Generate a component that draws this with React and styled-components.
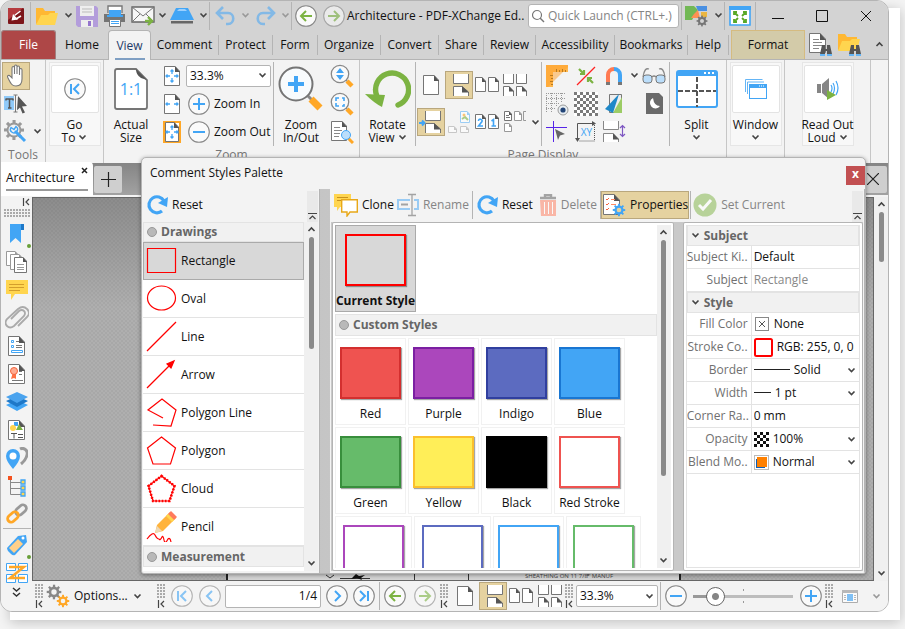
import React, { useState } from 'react';
import styled, { createGlobalStyle, css } from 'styled-components';

const c = {
  chrome: '#d3d3d3',
  ribbon: '#f3f3f3',
  line: '#b4b4b4',
  soft: '#e3e3e3',
  text: '#111',
  muted: '#767676',
  grey: '#757575',
  blue: '#42a5f5',
  green: '#7cb342',
  orange: '#ffa726',
  yellow: '#ffd54f',
  tan: '#e5d2a0',
  tanLine: '#b9a77d',
  red: '#f00',
};

const GlobalStyle = createGlobalStyle`
  * { box-sizing: border-box; }
  body {
    margin: 0;
    font: 12px/16px "Open Sans", "Noto Sans", sans-serif;
    color: ${c.text};
    background: #fff;
    overflow: hidden;
  }
  button, input, select { font: inherit; color: inherit; margin: 0; }
  button { background: none; border: 0; padding: 0; }
  svg { display: block; flex: none; }
`;

/* ---------- shell ---------- */

const Stage = styled.div`
  position: relative;
  min-height: 100vh;
  padding: 0 16px 17px 0;
  background: #f4f4f4;

  &::before {
    content: '';
    position: absolute;
    inset: 8px 5px 9px 10px;
    background: #fff;
    box-shadow: 0 2px 12px rgba(0, 0, 0, 0.22);
  }
`;

const Shell = styled.div`
  position: relative;
  display: flex;
  flex-direction: column;
  height: calc(100vh - 17px);
  border: 1px solid ${c.line};
  border-radius: 12px;
  overflow: hidden;
  background: ${c.ribbon};
`;

const TitleBar = styled.header`
  display: flex;
  align-items: center;
  height: 29px;
  flex: none;
  background: ${c.chrome};
`;

const Tool = styled.button`
  display: flex;
  align-items: center;
  justify-content: center;
  flex: none;
  width: ${p => p.$w || 28}px;
  height: ${p => p.$h || 28}px;
  opacity: ${p => (p.$dim ? 0.6 : 1)};
  ${p => p.$on && css`
    background: ${c.tan};
    border: 1px solid ${c.tanLine};
  `}
`;

const VLine = styled.span`
  flex: none;
  width: 1px;
  height: ${p => p.$h || 28}px;
  margin: 0 ${p => p.$m || 0}px;
  background: ${c.line};
`;

const DocTitle = styled.h1`
  flex: 1;
  margin: 0;
  font-size: 12px;
  font-weight: 400;
  white-space: nowrap;
`;

const Search = styled.label`
  display: flex;
  align-items: center;
  gap: 3px;
  width: 151px;
  height: 24px;
  flex: none;
  padding-left: 2px;
  margin-right: 2px;
  background: #fff;
  border: 1px solid ${c.line};
  border-radius: 3px;

  input {
    flex: 1;
    min-width: 0;
    padding: 0;
    border: 0;
    outline: 0;
    background: none;
  }
  input::placeholder { color: #858585; opacity: 1; }
`;

/* ---------- tabs ---------- */

const Tabs = styled.nav`
  display: flex;
  align-items: stretch;
  height: 30px;
  flex: none;
  background: ${c.chrome};
  border-bottom: 1px solid ${c.line};
`;

const Tab = styled.button`
  display: flex;
  align-items: center;
  justify-content: center;
  width: ${p => p.$w}px;
  flex: none;
  ${p => p.$kind === 'file' && css`
    background: #ae4747;
    color: #fff;
    border-radius: 3px 3px 0 0;
    border: 1px solid #a08080;
    border-bottom: 0;
  `}
  ${p => p.$kind === 'active' && css`
    background: ${c.ribbon};
    color: #1f3b68;
    border: 1px solid ${c.line};
    border-bottom: 0;
    border-radius: 4px 4px 0 0;
    margin-bottom: -1px;
    span {
      width: 30px;
      text-align: center;
      line-height: 24px;
      padding-top: 2px;
      border-bottom: 2px solid #7f9fc3;
    }
  `}
  ${p => p.$kind === 'format' && css`
    background: #d3cba9;
    border: 1px solid #d5bb80;
    border-bottom: 0;
    margin-left: 2px;
  `}
`;

const TabLine = styled(VLine)`
  align-self: center;
  height: 20px;
`;

const Spacer = styled.span`
  flex: 1;
`;

/* ---------- ribbon ---------- */

const Ribbon = styled.section`
  display: flex;
  height: 103px;
  flex: none;
  background: ${c.ribbon};
  overflow: hidden;
`;

const Group = styled.div`
  display: flex;
  flex-direction: column;
  width: ${p => p.$w}px;
  flex: none;
  border-right: 1px solid #c6c6c6;
`;

const GroupBody = styled.div`
  display: flex;
  align-items: center;
  justify-content: ${p => (p.$center ? 'center' : 'flex-start')};
  height: 87px;
  flex: none;
`;

const GroupLabel = styled.div`
  height: 16px;
  line-height: 16px;
  color: ${c.muted};
  text-align: center;
`;

const Stack = styled.div`
  display: grid;
  grid-template-columns: ${p => p.$cols || 'auto'};
  grid-auto-rows: 28px;
  align-items: center;
  justify-items: ${p => p.$items || 'center'};
  width: ${p => p.$w}px;
  flex: none;
`;

const BigButton = styled.button`
  display: flex;
  flex-direction: column;
  align-items: center;
  width: ${p => p.$w || 52}px;
  height: 84px;
  flex: none;
  line-height: 13px;
  white-space: nowrap;
  ${p => p.$card && css`
    border: 1px solid #e6e6e6;
    background: #f8f8f8;
  `}
`;

const BigIcon = styled.span`
  display: flex;
  align-items: center;
  justify-content: center;
  width: 48px;
  height: ${p => (p.$card ? 48 : 55)}px;
  flex: none;
  margin: ${p => (p.$card ? '2px 0 5px' : '0 0 1px')};
  ${p => p.$card && css`
    border: 1px solid ${c.soft};
    border-radius: 2px;
    background: #fff;
  `}
`;

const Caption = styled.span`
  display: flex;
  align-items: center;
  gap: 3px;
  height: 13px;
`;

const TextTool = styled.button`
  display: flex;
  align-items: center;
  gap: ${p => p.$gap || 4}px;
  height: ${p => p.$h || 28}px;
  padding: 0 ${p => p.$pad || 0}px;
  flex: none;
  white-space: nowrap;
  color: ${p => (p.$dim ? '#858585' : 'inherit')};
  svg { opacity: ${p => (p.$dim ? 0.5 : 1)}; }
  ${p => p.$on && css`
    background: ${c.tan};
    border: 1px solid ${c.tanLine};
  `}
`;

const Combo = styled.span`
  display: grid;
  align-items: center;
  width: ${p => p.$w || 85}px;
  height: 22px;
  flex: none;
  background: #fff;
  border: 1px solid ${c.line};
  border-radius: 2px;

  > * { grid-area: 1 / 1; }
  > svg { justify-self: end; margin-right: 3px; pointer-events: none; }
  select {
    appearance: none;
    width: 100%;
    border: 0;
    padding: 0 0 0 3px;
    background: none;
  }
`;

const DisplayGrid = styled.div`
  display: grid;
  grid-template-columns: 29px 28px 28px 28px 12px;
  grid-auto-rows: 28px;
  row-gap: 9px;
  align-items: center;
  justify-items: center;
`;

/* ---------- document area ---------- */

const DocTabs = styled.div`
  display: flex;
  align-items: center;
  height: 34px;
  flex: none;
  background: linear-gradient(#858585, #a2a2a2);
  border-bottom: 2px solid #f4f4f4;
`;

const DocTab = styled.div`
  display: flex;
  width: 92px;
  height: 34px;
  flex: none;
  padding: 0 5px;
  background: #fff;
  border-radius: 0 4px 0 0;

  span {
    flex: 1;
    height: 29px;
    line-height: 32px;
    border-bottom: 2px solid #999;
  }
  button {
    height: 29px;
    padding-bottom: 10px;
    border-bottom: 2px solid #999;
  }
`;

const TabSquare = styled.button`
  display: flex;
  align-items: center;
  justify-content: center;
  width: 28px;
  height: 27px;
  margin: 0 1px;
  background: #cfcfcf;
  border-radius: 2px;
`;

const Main = styled.div`
  display: flex;
  flex: 1;
  min-height: 0;
`;

const SideBar = styled.aside`
  display: flex;
  flex-direction: column;
  align-items: center;
  width: 31px;
  flex: none;
  background: ${c.ribbon};
  overflow: hidden;

  hr {
    width: 28px;
    margin: 0 0 2px;
    border: 0;
    border-top: 1px solid ${c.line};
  }
`;

const SideTop = styled.div`
  display: flex;
  flex-direction: column;
  align-items: flex-end;
  gap: 3px;
  width: 100%;
  height: 23px;
  padding: 1px 2px 0 3px;
  flex: none;
`;

const Grip = styled.span`
  display: block;
  width: ${p => p.$w || 9}px;
  height: ${p => p.$h || 15}px;
  background-image: radial-gradient(circle at 1px 1px, #aaa 0.8px, transparent 1px);
  background-size: 3px 3px;
`;

const SideButton = styled.button`
  display: flex;
  align-items: center;
  justify-content: center;
  width: 30px;
  height: 28px;
  flex: none;
  position: relative;

  &::after {
    content: '';
    display: ${p => (p.$dot ? 'block' : 'none')};
    position: absolute;
    right: 1px;
    bottom: 0;
    width: 4px;
    height: 4px;
    border-radius: 50%;
    background: #689f38;
  }
`;

const Work = styled.div`
  display: flex;
  flex-direction: column;
  flex: 1;
  min-width: 0;
`;

const Canvas = styled.div`
  display: flex;
  flex: 1;
  min-height: 0;
`;

const Doc = styled.div`
  flex: 1;
  display: flex;
  align-items: flex-end;
  min-width: 0;
  padding: 0 192px 0 193px;
  border: 1px solid #666;
  background:
    linear-gradient(rgba(60, 60, 60, 0.3), transparent 110px),
    repeating-conic-gradient(#a8a8a8 0 25%, #afafaf 0 50%) 0 0 / 4px 4px;
`;

const Sheet = styled.div`
  flex: 1;
  height: 6px;
  overflow: hidden;
  background: #d4d4d4;
  border-left: 2px solid #222;
  border-right: 2px solid #222;
`;

const ScrollTrack = styled.div`
  display: flex;
  flex-direction: column;
  align-items: center;
  justify-content: space-between;
  width: ${p => p.$w || 14}px;
  flex: none;
  padding: 4px 0;
  background: #f0f0f0;
`;

const Thumb = styled.span`
  width: 5px;
  flex: ${p => p.$part} 1 0;
  margin-top: 4px;
  border-radius: 3px;
  background: #8a8a8a;
`;

const Rest = styled.span`
  flex: ${p => p.$part} 1 0;
`;

const Status = styled.footer`
  display: flex;
  align-items: center;
  height: 30px;
  flex: none;
  padding-left: 3px;
  background: ${c.ribbon};
`;

const GripCell = styled.span`
  display: flex;
  flex-direction: column;
  gap: 1px;
  width: 11px;
  flex: none;
`;

const PageBox = styled.label`
  display: flex;
  align-items: center;
  width: 96px;
  height: 23px;
  margin: 0 4px 0 1px;
  padding-right: 3px;
  flex: none;
  background: #fff;
  border: 1px solid ${c.line};
  border-radius: 2px;

  input {
    flex: 1;
    min-width: 0;
    padding: 0;
    border: 0;
    background: none;
    text-align: right;
  }
`;

const Slider = styled.input`
  appearance: none;
  width: 100px;
  height: 22px;
  margin: 0 4px !important;
  flex: none;
  background:
    linear-gradient(#999, #999) 0 50% / 20px 3px no-repeat,
    linear-gradient(#999, #999) 50% 4px / 1px 2px no-repeat,
    linear-gradient(#999, #999) 50% 16px / 1px 2px no-repeat,
    linear-gradient(#bdbdbd, #bdbdbd) center / 100% 3px no-repeat;

  &::-webkit-slider-thumb {
    appearance: none;
    width: 19px;
    height: 19px;
    border: 1px solid #666;
    border-radius: 50%;
    background: radial-gradient(circle, #858585 0 3px, #fff 4px);
  }
`;

/* ---------- palette dialog ---------- */

const Palette = styled.section`
  position: absolute;
  left: 140px;
  right: 22px;
  top: 156px;
  bottom: 37px;
  display: flex;
  flex-direction: column;
  background: ${c.ribbon};
  border: 1px solid ${c.line};
  border-radius: 5px 5px 3px 3px;
  box-shadow: 0 1px 4px rgba(0, 0, 0, 0.4);
  overflow: hidden;
`;

const PaletteHead = styled.div`
  display: flex;
  align-items: center;
  justify-content: space-between;
  height: 31px;
  flex: none;
  padding: 0 0 1px 8px;
  h2 {
    margin: 0;
    font-size: 12px;
    font-weight: 400;
  }
`;

const CloseButton = styled.button`
  width: 19px;
  height: 19px;
  margin-top: 4px;
  background: #c25052;
  color: #fff;
  font-weight: 700;
  line-height: 14px;
  padding-bottom: 3px;
`;

const PaletteBody = styled.div`
  display: flex;
  gap: 10px;
  flex: 1;
  min-height: 0;
  background: linear-gradient(90deg, #b9b9b9, #ccc 40%);
`;

const Pane = styled.div`
  display: flex;
  flex-direction: column;
  width: ${p => (p.$w ? p.$w + 'px' : 'auto')};
  flex: ${p => (p.$w ? 'none' : 1)};
  min-width: 0;
  padding: 2px 1px;
  background: ${c.ribbon};
  border-right: 1px solid ${c.line};
`;

const PaneTools = styled.div`
  display: flex;
  align-items: flex-start;
  height: 31px;
  flex: none;
  padding-left: 3px;
`;

const PaneMore = styled.button`
  align-self: stretch;
  display: flex;
  align-items: flex-end;
  justify-content: center;
  width: 11px;
  margin-left: auto;
  padding-bottom: 2px;
  background: #e9e9e9;
`;

const PaneRow = styled.div`
  display: flex;
  flex: 1;
  min-height: 0;
`;

const ListBox = styled.div`
  flex: 1;
  min-width: 0;
  overflow: hidden;
  background: #fff;
`;

const Section = styled.h3`
  display: flex;
  align-items: center;
  gap: 4px;
  height: ${p => p.$h || 20}px;
  margin: 0;
  padding-left: 3px;
  background: #f1f1f1;
  border: 1px solid ${c.soft};
  color: #666;
  font-size: 12px;
  font-weight: 700;
`;

const Bullet = styled.span`
  width: 10px;
  height: 10px;
  border: 1px solid #999;
  border-radius: 50%;
  background: #b9b9b9;
`;

const ShapeRow = styled.button`
  display: flex;
  align-items: center;
  gap: 4px;
  width: 100%;
  height: 38px;
  padding-left: 3px;
  border-bottom: 1px solid ${c.soft};
  ${p => p.$on && css`
    background: #d8d8d8;
    border: 1px solid #aaa;
    padding-left: 2px;
  `}
`;

const Split = styled.div`
  display: grid;
  grid-template-columns: minmax(0, 341fr) minmax(0, 180fr);
  column-gap: 9px;
  flex: 1;
  min-height: 0;
  padding-left: 1px;
  background: #c9c9c9;
`;

const Framed = styled.div`
  display: flex;
  min-width: 0;
  min-height: 0;
  padding: 2px;
  background: #fff;
  border: 1px solid ${c.line};
  border-radius: 2px;
`;

const StyleCell = styled.button`
  display: flex;
  flex-direction: column;
  align-items: center;
  width: ${p => p.$w || 71}px;
  height: 87px;
  padding-top: 8px;
  border: 1px solid #f1f1f1;
  white-space: nowrap;
  ${p => p.$current && css`
    width: 81px;
    background: #d8d8d8;
    border-color: #aaa;
    font-weight: 700;
    margin-bottom: 2px;
  `}
`;

const Swatch = styled.span`
  width: 61px;
  height: 52px;
  flex: none;
  margin-bottom: 7px;
  background: ${p => p.$fill};
  border: 2px solid ${p => p.$stroke};
  box-shadow: 1px 1px 1px rgba(0, 0, 0, 0.35);
`;

const StyleLine = styled.div`
  display: flex;
  gap: 2px;
  padding-top: 2px;
`;

const PropSheet = styled.div`
  flex: 1;
  min-width: 0;
  border: 1px solid ${c.soft};
  border-top: 0;
`;

const PropRow = styled.div`
  display: flex;
  height: 23px;
  border-bottom: 1px solid ${c.soft};

  label {
    width: 65px;
    flex: none;
    padding-right: 3px;
    line-height: 22px;
    text-align: right;
    color: #707070;
    white-space: nowrap;
    border-right: 1px solid ${c.soft};
  }
`;

const PropValue = styled.div`
  display: flex;
  align-items: center;
  gap: 4px;
  flex: 1;
  min-width: 0;
  padding: 0 3px 0 2px;

  input, select {
    appearance: none;
    flex: 1;
    min-width: 0;
    width: 0;
    padding: 0;
    border: 0;
    background: none;
  }
  input:disabled { color: #888; }
`;

/* ---------- icons ---------- */

const Icon = ({ w = 24, h = w, box, children, ...rest }) => (
  <svg width={w} height={h} viewBox={box || `0 0 ${w} ${h}`} fill="none" aria-hidden="true" {...rest}>{children}</svg>
);

const Chevron = ({ color = '#444', up }) => (
  <Icon w={9} h={7}><path d={up ? 'M1.5 5 4.500 2 7.500 5' : 'M1.5 1.500 4.500 4.500 7.500 1.500'} stroke={color} strokeWidth="1.600" /></Icon>
);

const BarLeft = () => (
  <Icon w={8} h={8}><path d="M1.500 0v8M7 1 4 4l3 3" stroke="#444" strokeWidth="1.200" /></Icon>
);

const BarUp = () => (
  <Icon w={9} h={7}><path d="M0 .500h9M1.500 6 4.500 3l3 3" stroke="#444" strokeWidth="1.200" /></Icon>
);

const PageShape = ({ x = 0, y = 0, w = 16, h = 20, stroke = c.grey, fill = '#fff' }) => {
  const f = Math.round(w / 3);
  return (
    <g transform={`translate(${x} ${y})`}>
      <path d={`M.5.5H${w - f}L${w - 0.5} ${f}V${h - 0.5}H.5Z`} fill={fill} stroke={stroke} />
      <path d={`M${w - f} 0V${f + 1}H${w}Z`} fill={stroke === c.grey ? '#555' : stroke} />
    </g>
  );
};

const Circle = ({ s = 22, color = c.blue, d, dim }) => (
  <Icon w={s} box="0 0 22 22" opacity={dim ? 0.6 : 1}>
    <circle cx="11" cy="11" r="10.300" fill="#fafafa" stroke="#888" strokeWidth="1.100" />
    <path d={d} stroke={color} strokeWidth="2" />
  </Icon>
);

const paths = {
  plus: 'M11 5v12M5 11h12',
  minus: 'M5 11h12',
  left: 'M13 6l-5 5 5 5',
  right: 'M9 6l5 5-5 5',
  first: 'M7 6v10M15 6l-5 5 5 5',
  last: 'M15 6v10M7 6l5 5-5 5',
  back: 'M17 11H6M11 6l-5 5 5 5',
  fwd: 'M5 11h11M11 6l5 5-5 5',
};

const AppLogo = () => (
  <Icon w={16}>
    <rect width="16" height="16" rx="1" fill="#7c1519" />
    <path d="M0 1Q0 0 1 0H15L0 12Z" fill="#b53b3f" />
    <path d="m12.500 3-6 4.500M13 8l-5 3" stroke="#fff" strokeWidth="1.500" />
    <path d="M3.500 12.500 5 6l5 5.500Z" fill="#fff" />
  </Icon>
);

const Folder = () => (
  <Icon w={24} h={20}>
    <path d="M1 18V2H8L10 5H20V9" fill="#ffb833" />
    <path d="M1 19 6 9H13L15 7H23L20 19Z" fill={c.yellow} />
  </Icon>
);

const Floppy = () => (
  <Icon w={22}>
    <path d="M0 1H20L22 3V22H2L0 20Z" fill="#b39ddb" />
    <path d="M4 1H18V11H4ZM5 15H17V22H5Z" fill="#eee" />
    <path d="M6 4h10M6 7h10" stroke="#bbb" />
    <path d="M12 16h3v5h-3Z" fill="#9575cd" />
  </Icon>
);

const Printer = () => (
  <Icon w={22}>
    <path d="M4 8V1H18V8" fill="#fff" stroke="#777" strokeWidth="1.4" />
    <path d="M1 9H21V17H0V9Z" fill="#757575" />
    <path d="M5 5h12v5h2v2H3v-2h2Z" fill={c.blue} />
    <path d="M5.500 14.500H16.500V21.500H5.500Z" fill="#fff" stroke="#777" />
    <path d="M7 16.500h8M7 18.500h8" stroke={c.blue} />
  </Icon>
);

const Mail = () => (
  <Icon w={25} h={20}>
    <path d="M1 1H23V16H1Z" fill="#f6f6f6" stroke="#666" strokeWidth="1.400" />
    <path d="m1 1 11 9L23 1M1 16l8-8m14 8-8-8" stroke="#777" />
    <path d="M14 15h7M17 11l4 4-4 4" stroke={c.green} strokeWidth="2.4" />
  </Icon>
);

const Scanner = () => (
  <Icon w={24} h={17}>
    <path d="M6 1H18L24 13H0Z" fill={c.blue} />
    <path d="M9 2h6l2 2H7Z" fill="#9bd0ff" />
    <path d="M1 14H23V16.500H1Z" fill="#666" />
  </Icon>
);

const Undo = ({ flip }) => (
  <Icon w={21} h={20} transform={flip ? 'scale(-1 1)' : undefined}>
    <path d="M8 1 2 7l6 6M3 7h10c7 0 7 11 0 11H11" stroke="#83b9e6" strokeWidth="2.600" />
  </Icon>
);

const gearTeeth = [0, 45, 90, 135, 180, 225, 270, 315];
const Gear = ({ x, y, r = 6, color = c.grey, hole = '#f3f3f3' }) => (
  <g transform={`translate(${x} ${y})`}>
    {gearTeeth.map(a => (
      <rect key={a} x={-r / 5} y={-r * 1.35} width={r / 2.4} height={r} fill={color} transform={`rotate(${a})`} />
    ))}
    <circle r={r} fill={color} />
    <circle r={r * 0.5} fill={hole} />
  </g>
);

const Themes = () => (
  <Icon w={24} h={22}>
    <path d="M0 1H9L13 5 7 15H0Z" fill="#72b855" />
    <path d="M11 1h11v5H13Z" fill="#4a90e2" />
    <path d="m9 9 4-4 2 8H6Z" fill="#ff9052" /><path d="M16 7h6v5h-6Z" fill="#eab642" />
    <Gear x={17} y={16} r={4} hole={c.chrome} />
  </Icon>
);

const FullScreen = () => (
  <Icon w={22} h={20}>
    <path d="M1 1H21V19H1Z" fill="#fff" stroke={c.blue} strokeWidth="1.600" />
    <path d="M0 0h22v4H0Z" fill={c.blue} />
    <path d="m9 10-4-4m0 3V6h3m5 4 4-4m-3 0h3v3M9 12l-4 4m0-3v3h3m5-4 4 4m-3 0h3v-3" stroke="#59a827" strokeWidth="1.800" />
  </Icon>
);

const Binoc = ({ x = 0, y = 0 }) => (
  <g transform={`translate(${x} ${y})`}>
    <path d="M2 0h3v4h2V0h3l2 9H7V6H5v3H0Z" fill="#555" /><path d="M0 9h5v2H0Zm7 0h5v2H7Z" fill="#64b5f6" />
  </g>
);

const FindDoc = () => (
  <Icon w={23} h={23}><PageShape w={17} h={20} /><path d="M4 6.500h6M4 9.500h9M4 12.500h9M4 15.500h6" stroke="#888" /><Binoc x={11} y={12} /></Icon>
);
const FindFolder = () => (
  <Icon w={24} h={23}>
    <path d="M1 17V1H8L10 4H20V9" fill="#ffb833" /><path d="M1 18 5 8H13L15 6H23L20 18Z" fill={c.yellow} /><Binoc x={12} y={12} />
  </Icon>
);

const Hand = () => (
  <Icon w={20} h={24}>
    <path d="M6 14V4c0-2 2.500-2 2.500 0V10 2.500c0-2 2.500-2 2.500 0V10 3.500c0-2 2.500-2 2.500 0V11 6c0-2 2.500-2 2.500 0v9c0 4-2 7-6 7-4 0-5-2-8-8-1.500-2.500 1-3.500 2.500-1.500Z" fill="#fff" stroke="#777" strokeWidth="1.100" />
  </Icon>
);

const TextSelect = () => (
  <Icon w={24} h={20}>
    <path d="M0 2h10v14H0Z" fill="#90caf9" /><path d="M2 5h7M5.500 5v9M4 14h3.500M2 4.500v2M9 4.500v2" stroke="#555" strokeWidth="1.500" />
    <path d="M9.500 1h4M11.500 1v17M9.500 18h4" stroke="#777" />
    <path d="m14 2 9 10-5 .4 3 6-2.500 1.200-2.500-6-3 2.600Z" fill="#555" />
  </Icon>
);

const GearWrench = () => (
  <Icon w={24}>
    <Gear x={10} y={10} r={7.4} color="#999" hole="none" />
    <circle cx="10" cy="10" r="5.500" fill="#f3f3f3" />
    <path d="m11 11 10 10" stroke={c.blue} strokeWidth="3" /><path d="M12 6.500a3.500 3.500 0 1 1-5 1l3 2Z" stroke={c.blue} strokeWidth="1.400" />
  </Icon>
);

const ActualSize = () => (
  <Icon w={34} h={42}>
    <path d="M3 1H22L33 12V39Q33 41 31 41H3Q1 41 1 39V3Q1 1 3 1Z" fill="#fff" stroke="#757575" strokeWidth="1.800" />
    <path d="M22 1 33 12 27 10Q22 7 22 1Z" fill="#555" />
    <text x="17" y="27" textAnchor="middle" fontSize="16" fill={c.blue}>1:1</text>
  </Icon>
);

const FitPage = ({ kind }) => (
  <Icon w={18} h={22}>
    {kind === 'visible' ? <path d="M1 1H17V21H1Z" fill="#fff" stroke={c.orange} strokeWidth="2" /> : null}
    <PageShape x={kind === 'visible' ? 2 : 1} y={1} w={kind === 'visible' ? 14 : 16} />
    <path d="M7 11H3m1.500-1.500L3 11l1.500 1.500M11 11h4m-1.500-1.500L15 11l-1.500 1.500" stroke={c.blue} strokeWidth="1.300" />
    {kind !== 'width' && <path d="M9 9V5M7.500 6.500 9 5l1.500 1.500M9 13v4m-1.500-1.500L9 17l1.500-1.500" stroke={c.blue} strokeWidth="1.300" />}
  </Icon>
);

const ZoomBig = () => (
  <Icon w={46}>
    <path d="m30 30 4 4" stroke="#888" strokeWidth="3" /><path d="m33 33 9 9" stroke={c.orange} strokeWidth="7" />
    <circle cx="18" cy="18" r="16.500" fill="#f8fbfd" stroke="#757575" strokeWidth="2" />
    <path d="M18 10v16M10 18h16" stroke={c.blue} strokeWidth="4" />
  </Icon>
);

const Loupe = ({ kind }) => (
  <Icon w={24}>
    <path d="m15 15 2 2" stroke="#888" strokeWidth="2" /><path d="m17 17 5 5" stroke={c.orange} strokeWidth="4.400" />
    <circle cx="10" cy="10" r="8.700" fill="#fafafa" stroke="#888" strokeWidth="1.300" />
    {kind === 'dyn'
      ? <path d="m10 4 4 5H6Zm0 12-4-5h8Z" fill={c.blue} />
      : <path d="M6 9V6h3m3 0h2v3m0 3v2h-2m-3 0H6v-3" stroke={c.blue} strokeWidth="1.600" />}
  </Icon>
);

const DocLoupe = () => (
  <Icon w={24}>
    <PageShape x={1} y={1} /><path d="M4 7.500h6M4 10.500h8M4 13.500h6M4 16.500h5" stroke="#888" />
    <path d="m18 18 5 5" stroke={c.orange} strokeWidth="3" /><circle cx="16" cy="15" r="4.500" fill="#bbdefb" stroke={c.blue} />
  </Icon>
);

const Rotate = () => (
  <Icon w={46} h={40}>
    <path d="M11.500 25A16.500 16.500 0 1 1 33 35" stroke={c.green} strokeWidth="5.400" strokeLinecap="round" transform="translate(0 1)" />
    <path d="m0 25 20 1-3 12Q9 34 0 25Z" fill={c.green} />
  </Icon>
);

const ContPages = ({ arrow }) => (
  <Icon w={24}>
    {arrow && <path d="M0 13h5M3 10.500 5.500 13 3 15.500" stroke={c.blue} strokeWidth="2" />}
    <path d="M6.500 1V10.500H21.500V1" fill="#fff" stroke={c.grey} />
    <path d="M6.500 23V13.500H15L21.500 19V23" fill="#fff" stroke={c.grey} /><path d="M15 13v6.500h7Z" fill="#555" />
  </Icon>
);

const SinglePage = () => <Icon w={16} h={22}><PageShape y={1} /></Icon>;

const TwoPages = ({ nums }) => (
  <Icon w={24} h={18}>
    <PageShape y={1} w={11} h={15} /><PageShape x={13} y={1} w={11} h={15} />
    {nums && <path d="M3.500 8c0-3 4.500-2 3.500.5L3.500 13H8M16.500 8l2-1.500V13m-2 0h4.500" stroke={c.blue} strokeWidth="1.600" />}
  </Icon>
);

const FourPages = () => (
  <Icon w={24} h={22}>
    <path d="M.5 0V9.500H10.500V0M13.500 0V9.500H23.500V0" stroke={c.grey} fill="#fff" />
    <path d="M.5 22V12.500H6L10.500 17V22M13.500 22V12.500h5.500l4.500 4.500v5" stroke={c.grey} fill="#fff" />
    <path d="M6 12v5.500h5Zm13 0v5.500h5Z" fill="#555" />
  </Icon>
);

const CoverPages = () => (
  <Icon w={24} h={24} opacity={0.6}>
    <PageShape x={13} y={1} w={10} h={12} stroke="#64b5f6" /><path d="m15 9 3-2 3 3" stroke={c.green} strokeWidth="2" />
    <circle cx="17" cy="5" r="1.500" fill={c.orange} />
    <PageShape x={1} y={16} w={9} h={7} stroke="#aaa" /><PageShape x={13} y={16} w={9} h={7} stroke="#aaa" />
  </Icon>
);

const MixedPages = () => (
  <Icon w={24} h={22}>
    <PageShape x={1} w={8} h={10} /><PageShape x={11} w={8} h={10} stroke="#999" /><path d="M23 .5h-2.500v9H23" stroke="#999" />
    <path d="M3 4.500h3M3 6.500h4" stroke="#777" /><PageShape x={1} y={12} w={8} h={9} stroke="#999" />
  </Icon>
);

const Rulers = () => (
  <Icon w={22}>
    <path d="M0 0H22V7H7V22H0Z" fill="#ffb74d" /><path d="M0 0H22V2L2 22H0Z" fill="#ffa02a" opacity=".5" />
    <path d="M10.500 7V4M13.500 7V5M16.500 7V4M19.500 7V5M7 10.500H4M7 13.500H5M7 16.500H4M7 19.500H5" stroke="#b87a20" />
  </Icon>
);

const Guides = () => (
  <Icon w={20}>
    <path d="M1 19 19 1" stroke="#f22" strokeWidth="1.300" />
    <path d="m3 3 5 5m0-4v4H4m13 9-5-5m0 4v-4h4" stroke={c.green} strokeWidth="2.200" />
  </Icon>
);

const Magnet = () => (
  <Icon w={18} h={20}>
    <path d="M3 17V9a6 6 0 0 1 6-6" stroke="#ff7a52" strokeWidth="4" />
    <path d="M9 3a6 6 0 0 1 6 6v8" stroke={c.blue} strokeWidth="4" />
    <path d="M1 17.500h4M13 17.500h4" stroke="#777" strokeWidth="3" />
  </Icon>
);

const Glasses = () => (
  <Icon w={24} h={18}>
    <path d="M1 10C2 3 4 1 7 2M23 10C22 3 20 1 17 2M10 10q2-2 4 0" stroke="#888" strokeWidth="1.300" />
    <rect x="1" y="8" width="9" height="8" rx="3" fill="#bbdefb" stroke="#777" /><rect x="14" y="8" width="9" height="8" rx="3" fill="#bbdefb" stroke="#777" />
  </Icon>
);

const GridEye = () => (
  <Icon w={24}>
    <path d="M1 1.500h20M1 6.500h20M1 11.500h14M1 16.500h10M1.500 1v19M6.500 1v19M11.500 1v14M16.500 1v10" stroke="#999" strokeDasharray="1 1" />
    <circle cx="18" cy="18" r="5" fill="#e8eef2" stroke="#999" /><circle cx="18" cy="18" r="2.600" fill="#247" />
  </Icon>
);

const Checker = ({ s = 24, n = 8, color = '#7b7b7b' }) => (
  <Icon w={s} box={`0 0 ${n} ${n}`}>
    <rect width={n} height={n} fill="#fff" />
    {Array.from({ length: n * n }, (_, i) => ((i % n) + Math.floor(i / n)) % 2 === 0 && (
      <rect key={i} x={i % n} y={Math.floor(i / n)} width="1" height="1" fill={color} />
    ))}
  </Icon>
);

const Book = () => (
  <Icon w={18} h={21}>
    <path d="M4.500 1.500h12v18h-12Z" fill="#eee" stroke="#777" /><path d="M17 4v16H8Z" fill="#9ccc65" /><path d="M14 1 0 16l8 4Z" fill="#1e88c8" />
  </Icon>
);

const Night = () => (
  <Icon w={18} h={21}>
    <path d="M1 0H14L18 4V21H1Z" fill="#6a6a6a" /><path d="M8 5a5.500 5.500 0 1 0 7 8q-6 0-7-8Z" fill="#fff" />
  </Icon>
);

const CrossCursor = () => (
  <Icon w={22}>
    <path d="M7.500 0v21M0 6.500h21" stroke="#5524e8" /><path d="m9 8 10 5-5 1.500L12 19Z" fill="#666" />
  </Icon>
);

const XYIcon = () => (
  <Icon w={22}>
    <path d="M2.500 20V2.500H19" stroke="#555" /><path d="m0 17 2.500 4L5 17ZM17 0l4 2.500L17 5Z" fill="#555" />
    <path d="M19.500 4v16H4" stroke="#555" strokeDasharray="1 1" />
    <text x="11.500" y="15" textAnchor="middle" fontSize="10" fill={c.blue}>XY</text>
  </Icon>
);

const GapPages = () => (
  <Icon w={24}>
    <path d="M1.500 1v8.500h15V1M1.500 22v-8.500H11l5.500 5.500v3" stroke="#888" fill="#fff" /><path d="M11 13v6.500h6Z" fill="#555" />
    <path d="M20.500 6v10M18 8l2.500-2.500L23 8m-5 6 2.500 2.500L23 14" stroke="#7e57c2" strokeWidth="1.200" />
  </Icon>
);

const SplitIcon = () => (
  <Icon w={42} h={38}>
    <rect x="1" y="1" width="40" height="36" rx="2" fill="#fff" stroke={c.blue} strokeWidth="2" />
    <path d="M1 1h40v5H1Z" fill={c.blue} /><path d="M28 3h10" stroke="#fff" strokeWidth="2" strokeDasharray="2 2" />
    <path d="M21 7v30M2 21h38" stroke="#555" strokeWidth="2" strokeDasharray="5 2" />
  </Icon>
);

const WindowIcon = () => (
  <Icon w={24} h={22}>
    <path d="M1.500 14V1.500h17M3.500 16V4H20" stroke="#64b5f6" /><rect x="5.500" y="6.500" width="17" height="14" fill="#fff" stroke={c.blue} />
    <path d="M5 6h18v4H5Z" fill={c.blue} /><path d="M15 8h6" stroke="#fff" strokeDasharray="1 1" />
  </Icon>
);

const Speaker = () => (
  <Icon w={24}>
    <path d="M1 7h4v9H1Zm5 0 7-6v21l-7-6Z" fill="#858585" />
    <path d="M15 8q2 3 0 7m2-9q3 5 0 11m3-13q4 7 0 14" stroke={c.blue} strokeWidth="1.200" /><path d="m11 13 9 5-9 5Z" fill={c.green} />
  </Icon>
);

const Bookmark = () => (
  <Icon w={22}><path d="M4 1h11v19l-5.500-5L4 20Z" fill={c.blue} /><path d="M15 1h3v6h-3Z" fill="#1e78c8" /></Icon>
);
const Pages = () => (
  <Icon w={22}><PageShape w={13} h={15} stroke="#999" /><PageShape x={4} y={3} w={13} h={16} stroke="#999" /><PageShape x={8} y={6} w={13} h={16} /><path d="M11 13.500h7M11 16.500h7M11 18.500h7" stroke="#999" /></Icon>
);
const Comments = () => (
  <Icon w={22}><path d="M0 1H22V15H9L5 21V15H0Z" fill={c.yellow} /><path d="M3 5.500h15M3 8.500h15M3 11.500h11" stroke="#d39e2c" /></Icon>
);
const Clip = () => (
  <Icon w={24}><path d="m6 13 8-8q3-2 5 0t0 5L9 20q-4 3-7 0-3-3 0-7L13 3q5-4 9 0t0 8l-9 9" stroke="#aaa" strokeWidth="1.800" /></Icon>
);
const Fields = () => (
  <Icon w={20} h={22}><PageShape x={1} y={1} w={17} h={20} /><path d="M4.500 5.500h2v2h-2Zm0 5h2v2h-2Zm0 5h11v2h-11Z" stroke={c.blue} /><path d="M9 6.500h3M9 10.500h6M9 12.500h6" stroke="#777" /></Icon>
);
const Certificate = () => (
  <Icon w={20} h={22}><PageShape x={1} y={1} w={17} h={20} /><path d="M6 9 4 16l3-1 2 1V9Z" fill="#ff7043" /><circle cx="7" cy="8" r="3.500" fill="#ffab91" stroke="#f4643c" /><path d="M12 8.500h3M12 11.500h3M5 17.500h11" stroke="#777" /></Icon>
);
const Layers = () => (
  <Icon w={22}><path d="m11 9 11 5-11 6-11-6Z" fill="#42a5f5" /><path d="m11 5 11 5-11 6L0 10Z" fill="#1e78c8" /><path d="m11 1 11 5-11 6L0 6Z" fill="#4aa3ee" /></Icon>
);
const ContentIcon = () => (
  <Icon w={20} h={22}><PageShape x={1} y={1} w={17} h={20} /><path d="M7 3h4v4H7Z" fill={c.blue} /><circle cx="6" cy="9" r="3" fill={c.yellow} /><path d="m12 5 4 6H9Z" fill={c.green} /><path d="M4 14.500h6M7 14.500v5M11 15.500h5M11 18.500h5" stroke="#555" /></Icon>
);
const Pins = () => (
  <Icon w={22}><path d="M14 2a5 5 0 0 1 7 6q-1 5-6 9" stroke="#999" strokeWidth="3" /><path d="M7 22Q0 14 0 9a7 7 0 1 1 14 0q0 5-7 13Z" fill={c.blue} /><circle cx="7" cy="9" r="3.500" fill="#fff" /></Icon>
);
const Tree = () => (
  <Icon w={22}><path d="M4.500 3v16.500h11M4 7.500h11M4 13.500h11" stroke="#888" /><path d="M2 1h4v4H2Z" fill="#f4511e" /><path d="M15 5h4v4h-4Zm0 6h4v4h-4Zm0 6h4v4h-4Z" fill={c.yellow} stroke={c.blue} strokeWidth="1.300" /></Icon>
);
const Chain = () => (
  <Icon w={22} strokeWidth="2.800">
    <rect x="-6" y="-3.500" width="12" height="7" rx="3.500" stroke="#999" transform="translate(15 7) rotate(-42)" />
    <rect x="-6" y="-3.500" width="12" height="7" rx="3.500" stroke={c.orange} transform="translate(7 14) rotate(-42)" />
  </Icon>
);
const TagIcon = () => (
  <Icon w={22}><path d="m1 14 11-12 8-1 1 7L9 21q-2 1-4-1l-3-3q-1-2-1-3Z" fill={c.blue} /><path d="m3 14 9-9 5 5-9 9Z" fill="#ffd08a" /><circle cx="17" cy="4" r="1.500" fill="#fff" /></Icon>
);
const Order = () => (
  <Icon w={22}><path d="M.5 1.500h9v7h-9Zm12 0h9v7h-9ZM.5 12.500h9v8h-9Zm12 0h9v8h-9Z" fill="#fff" stroke={c.blue} /><path d="M3 5h15L4 16h15" stroke={c.orange} strokeWidth="2.400" /></Icon>
);

const ResetIcon = () => (
  <Icon w={22}><path d="M16 17a8 8 0 1 1 2-10" stroke={c.blue} strokeWidth="3.200" /><path d="m22 3-1 10-9-4Z" fill={c.blue} /></Icon>
);
const CloneIcon = () => (
  <Icon w={24}><path d="M0 1H17V14H6L3 18V14H0Z" fill={c.yellow} /><path d="M3 4.500h11M3 7.500h5" stroke="#c8921e" /><path d="M7.700 6.700H23.300V19H16L13 23V19H7.700Z" fill="#fff" stroke="#e8a818" strokeWidth="1.400" /></Icon>
);
const RenameIcon = () => (
  <Icon w={22} h={24}><path d="M13 7H1v9h12M17 7h4v9h-4" stroke="#42a5f5" strokeWidth="2" /><path d="M4 11.500h7" stroke="#555" strokeWidth="2" /><path d="M11 1.500h8M15 1v22M11 22.500h8" stroke="#555" strokeWidth="1.300" /></Icon>
);
const Trash = () => (
  <Icon w={18} h={22}><path d="M1 4h16M6 3V1h6v2" stroke="#555" strokeWidth="2.400" /><path d="M1 6H17V22H2Z" fill="#ff7a5c" /><path d="M5.500 8v12M9.500 8v12M13.500 8v12" stroke="#fff" /></Icon>
);
const PropsIcon = () => (
  <Icon w={24}><PageShape x={1} y={1} w={17} h={21} /><path d="m4 6 1 1 2-2M4 11l1 1 2-2M4 16l1 1 2-2" stroke="#f4643c" /><path d="M9 6.500h4M9 11.500h5" stroke="#ff8a65" /><Gear x={17} y={17} r={4.600} color={c.blue} hole={c.tan} /></Icon>
);
const CheckCircle = () => (
  <Icon w={24}><circle cx="12" cy="12" r="11.500" fill="#7cb342" /><path d="m6 12 4 4 8-9" stroke="#fff" strokeWidth="3" /></Icon>
);
const Gears = () => (
  <Icon w={24}><Gear x={8} y={8} r={5.400} color="#888" /><Gear x={17} y={17} r={4.600} color={c.orange} /></Icon>
);
const ViewIcon = () => (
  <Icon w={16} h={13} opacity={0.65}><path d="M.5.500h15v12H.5Z" fill="#fff" stroke="#888" /><path d="M0 0h16v3H0Z" fill="#999" /><path d="M5 4h6v7H5Z" fill={c.blue} /><path d="M2 5.500h2M2 7.500h2M2 9.500h2M12 5.500h2M12 7.500h2M12 9.500h2" stroke="#999" /></Icon>
);

const shapeDrawings = {
  Rectangle: <path d="M1.500 2.500h28v24h-28Z" />,
  Oval: <ellipse cx="15.500" cy="15" rx="14" ry="12" />,
  Line: <path d="M1 30 30 1" />,
  Arrow: <><path d="M1 29 26 4" /><path d="m28 2-3 7-4-4Z" fill={c.red} /></>,
  'Polygon Line': <path d="M17 21 2 13 16 2l14 11-5 16-18-1" />,
  Polygon: <path d="m15.500 2 14 11-5 16H7L1.500 13Z" />,
  Cloud: <><path d="m15.500 3 13 10-5 15H7L2.500 13Z" /><path d="m15.500 3 13 10-5 15H7L2.500 13Z" strokeWidth="2.600" strokeDasharray="1.600 1.600" /></>,
  Pencil: (
    <>
      <path d="m9 22 2-8L24 1l6 6-13 13Z" fill="#ffb33c" stroke="none" /><path d="m22 3 3-3 6 6-3 3Z" fill="#ff7a5c" stroke="none" />
      <path d="m20 5 2-2 6 6-2 2Z" fill="#ffd54f" stroke="none" /><path d="m9 22 2-7 5 5Z" fill="#eed9b8" stroke="none" />
      <path d="M1 28q6-8 8-4t4 4q1 2 3-2 1-2 2 3t4-1q2-2 3 3" />
    </>
  ),
};

const ShapeIcon = ({ name }) => (
  <Icon w={31} h={31} stroke={c.red} strokeWidth="1.200">{shapeDrawings[name]}</Icon>
);

/* ---------- data ---------- */

// [name, width, kind, line after]
const tabs = [
  ['Home', 52], ['View', 43, 'active'], ['Comment', 68, '', true], ['Protect', 54, '', true], ['Form', 45, '', true],
  ['Organize', 63, '', true], ['Convert', 58, '', true], ['Share', 45, '', true], ['Review', 52, '', true],
  ['Accessibility', 79, '', true], ['Bookmarks', 73, '', true], ['Help', 41, '', true], ['Format', 74, 'format'],
];

const sideTop = [
  ['Bookmarks', Bookmark, true], ['Thumbnails', Pages], ['Comments', Comments], ['Attachments', Clip], ['Fields', Fields],
  ['Signatures', Certificate], ['Layers', Layers], ['Content', ContentIcon], ['Destinations', Pins], ['Tags tree', Tree], ['Links', Chain],
];

const shapes = ['Rectangle', 'Oval', 'Line', 'Arrow', 'Polygon Line', 'Polygon', 'Cloud', 'Pencil'];

const styleRows = [
  [
    { name: 'Red', fill: '#ef5350', stroke: '#d32f2f' }, { name: 'Purple', fill: '#ab47bc', stroke: '#7b1fa2' },
    { name: 'Indigo', fill: '#5c6bc0', stroke: '#303f9f' }, { name: 'Blue', fill: '#42a5f5', stroke: '#1976d2' },
  ],
  [
    { name: 'Green', fill: '#66bb6a', stroke: '#388e3c' }, { name: 'Yellow', fill: '#ffee58', stroke: '#fbc02d' },
    { name: 'Black', fill: '#000', stroke: '#000' }, { name: 'Red Stroke', fill: '#fff', stroke: '#ef5350' },
  ],
  [
    { stroke: '#ab47bc', w: 77 }, { stroke: '#5c6bc0', w: 77 }, { stroke: '#42a5f5', w: 71 }, { stroke: '#66bb6a', w: 75 },
  ],
];

const NoneBox = () => (
  <Icon w={16}><rect x="1.500" y="1.500" width="13" height="13" fill="#fff" stroke="#888" /><path d="m5 5 6 6m0-6-6 6" stroke="#555" /></Icon>
);
const StrokeBox = () => (
  <Icon w={19}><rect x="1" y="1" width="17" height="17" rx="1.500" fill="#fff" stroke={c.red} strokeWidth="2" /></Icon>
);
const Dash = ({ w }) => <Icon w={w} h={2}><path d={`M0 .500h${w}`} stroke="#222" /></Icon>;
const BlendBox = () => (
  <Icon w={15}><rect x=".5" y=".5" width="14" height="14" fill="#fff" stroke="#bbb" /><path d="M2 4h9v9H2Z" fill="#0d5fb8" /><path d="M3 2h10v10H3Z" fill="#ff8000" /></Icon>
);

const subjectProps = [
  { label: 'Subject Ki..', value: 'Default' },
  { label: 'Subject', value: 'Rectangle', disabled: true },
];

const styleProps = [
  { label: 'Fill Color', value: 'None', icon: <NoneBox /> },
  { label: 'Stroke Co..', value: 'RGB: 255, 0, 0', icon: <StrokeBox /> },
  { label: 'Border', value: 'Solid', icon: <Dash w={36} />, select: true },
  { label: 'Width', value: '1 pt', icon: <Dash w={17} />, select: true },
  { label: 'Corner Ra..', value: '0 mm' },
  { label: 'Opacity', value: '100%', icon: <Checker s={15} n={5} color="#111" />, select: true },
  { label: 'Blend Mo..', value: 'Normal', icon: <BlendBox />, select: true },
];

/* ---------- parts ---------- */

const Property = ({ label, value, icon, select, disabled }) => {
  const id = 'prop-' + label.replace(/\W/g, '').toLowerCase();
  return (
    <PropRow>
      <label htmlFor={id}>{label}</label>
      <PropValue>
        {icon}
        {select
          ? <><select id={id}><option>{value}</option></select><Chevron /></>
          : <input id={id} defaultValue={value} disabled={disabled} />}
      </PropValue>
    </PropRow>
  );
};

const ZoomCombo = ({ w }) => (
  <Combo $w={w}>
    <select aria-label="Zoom"><option>33.3%</option></select>
    <Chevron />
  </Combo>
);

const GripHandle = () => <GripCell><Grip /><BarLeft /></GripCell>;

const Top = () => (
  <TitleBar>
    <Tool $w={29} aria-label="Menu"><AppLogo /></Tool>
    <VLine />
    <Tool $w={32} aria-label="Open"><Folder /></Tool>
    <Tool $w={10} aria-label="Recent"><Chevron /></Tool>
    <Tool $w={28} aria-label="Save"><Floppy /></Tool>
    <Tool aria-label="Print"><Printer /></Tool>
    <Tool aria-label="Email"><Mail /></Tool>
    <Tool $w={10} aria-label="Email options"><Chevron /></Tool>
    <Tool $w={30} aria-label="Scan"><Scanner /></Tool>
    <Tool $w={12} aria-label="Scan options"><Chevron /></Tool>
    <VLine />
    <Tool $w={30} aria-label="Undo"><Undo /></Tool>
    <Tool $w={10} aria-label="Undo list"><Chevron color="#999" /></Tool>
    <Tool $w={30} aria-label="Redo"><Undo flip /></Tool>
    <Tool $w={11} aria-label="Redo list"><Chevron color="#999" /></Tool>
    <VLine />
    <Tool aria-label="Previous view"><Circle color={c.green} d={paths.back} /></Tool>
    <Tool $w={27} aria-label="Next view"><Circle color={c.green} d={paths.fwd} dim /></Tool>
    <DocTitle>Architecture - PDF-XChange Ed..</DocTitle>
    <Search>
      <Icon w={14}><circle cx="6" cy="6" r="4.500" stroke="#777" strokeWidth="1.200" /><path d="m9 9 4 4" stroke="#777" strokeWidth="1.500" /></Icon>
      <input aria-label="Quick Launch" placeholder="Quick Launch (CTRL+.)" />
    </Search>
    <VLine />
    <Tool $w={30} aria-label="Themes"><Themes /></Tool>
    <Tool $w={12} aria-label="Theme list"><Chevron /></Tool>
    <VLine />
    <Tool $w={30} aria-label="Full screen"><FullScreen /></Tool>
    <VLine />
    <Tool $w={44} aria-label="Minimize"><Icon w={12}><path d="M0 8.500h12" stroke="#111" /></Icon></Tool>
    <Tool $w={44} aria-label="Maximize"><Icon w={12}><path d="M.5.500h11v11H.5Z" stroke="#111" /></Icon></Tool>
    <Tool $w={44} aria-label="Close"><Icon w={10}><path d="m0 0 10 10M10 0 0 10" stroke="#111" /></Icon></Tool>
  </TitleBar>
);

const RibbonTabs = () => (
  <Tabs>
    <Tab $w={55} $kind="file">File</Tab>
    {tabs.map(([name, w, kind, line]) => (
      <React.Fragment key={name}>
        <Tab $w={w - (line ? 1 : 0)} $kind={kind}><span>{name}</span></Tab>
        {line && <TabLine />}
      </React.Fragment>
    ))}
    <Tool $w={30} aria-label="Find"><FindDoc /></Tool>
    <Tool $w={28} aria-label="Search"><FindFolder /></Tool>
    <Spacer />
    <Tool $w={18} aria-label="Collapse ribbon"><Chevron up /></Tool>
  </Tabs>
);

const RibbonBar = () => (
  <Ribbon>
    <Group $w={45}>
      <GroupBody>
        <Stack $cols="30px 12px" $w={44}>
          <Tool $on aria-label="Hand"><Hand /></Tool><span />
          <Tool aria-label="Select text"><TextSelect /></Tool><span />
          <Tool aria-label="Tool options"><GearWrench /></Tool><Chevron />
        </Stack>
      </GroupBody>
      <GroupLabel>Tools</GroupLabel>
    </Group>
    <Group $w={58}>
      <GroupBody $center>
        <BigButton $card>
          <BigIcon $card><Circle d={paths.first} /></BigIcon>
          <Caption>Go</Caption><Caption>To <Chevron /></Caption>
        </BigButton>
      </GroupBody>
    </Group>
    <Group $w={256}>
      <GroupBody>
        <BigButton $w={54}>
          <BigIcon><ActualSize /></BigIcon>
          <Caption>Actual</Caption><Caption>Size</Caption>
        </BigButton>
        <Stack $w={28}>
          <Tool $w={22} aria-label="Fit page"><FitPage /></Tool>
          <Tool $w={22} aria-label="Fit width"><FitPage kind="width" /></Tool>
          <Tool $w={22} aria-label="Fit visible"><FitPage kind="visible" /></Tool>
        </Stack>
        <Stack $w={87} $items="start">
          <ZoomCombo w={85} />
          <TextTool $pad={2}><Circle d={paths.plus} />Zoom In</TextTool>
          <TextTool $pad={2}><Circle d={paths.minus} />Zoom Out</TextTool>
        </Stack>
        <VLine $h={84} />
        <BigButton $w={54}>
          <BigIcon><ZoomBig /></BigIcon>
          <Caption>Zoom</Caption><Caption>In/Out</Caption>
        </BigButton>
        <Stack $w={28}>
          <Tool aria-label="Dynamic zoom"><Loupe kind="dyn" /></Tool>
          <Tool aria-label="Marquee zoom"><Loupe /></Tool>
          <Tool aria-label="Pan and zoom"><DocLoupe /></Tool>
        </Stack>
      </GroupBody>
      <GroupLabel>Zoom</GroupLabel>
    </Group>
    <Group $w={367}>
      <GroupBody>
        <BigButton $w={55}>
          <BigIcon><Rotate /></BigIcon>
          <Caption>Rotate</Caption><Caption>View <Chevron /></Caption>
        </BigButton>
        <VLine $h={84} />
        <DisplayGrid>
          <Tool aria-label="Single page"><SinglePage /></Tool>
          <Tool $on aria-label="Continuous"><ContPages /></Tool>
          <Tool aria-label="Two pages"><TwoPages /></Tool>
          <Tool aria-label="Two pages continuous"><FourPages /></Tool>
          <span />
          <Tool $on aria-label="Page gaps"><ContPages arrow /></Tool>
          <Tool aria-label="Cover page"><CoverPages /></Tool>
          <Tool aria-label="Right to left"><TwoPages nums /></Tool>
          <Tool aria-label="Layout"><MixedPages /></Tool>
          <Chevron />
        </DisplayGrid>
        <VLine $h={84} />
        <Stack $cols="30px 28px 28px 12px 28px" $w={127}>
          <Tool aria-label="Rulers"><Rulers /></Tool>
          <Tool aria-label="Guides"><Guides /></Tool>
          <Tool aria-label="Snap"><Magnet /></Tool>
          <Chevron />
          <Tool aria-label="Reading mode"><Glasses /></Tool>
          <Tool aria-label="Grid"><GridEye /></Tool>
          <Tool aria-label="Transparency"><Checker /></Tool>
          <Tool aria-label="Line weights"><Book /></Tool>
          <span />
          <Tool aria-label="Night mode"><Night /></Tool>
          <Tool aria-label="Cursor guides"><CrossCursor /></Tool>
          <Tool aria-label="Coordinates"><XYIcon /></Tool>
          <Tool aria-label="Gaps"><GapPages /></Tool>
        </Stack>
        <VLine $h={84} />
        <BigButton $w={53}>
          <BigIcon><SplitIcon /></BigIcon>
          <Caption>Split</Caption><Caption><Chevron /></Caption>
        </BigButton>
      </GroupBody>
      <GroupLabel>Page Display</GroupLabel>
    </Group>
    <Group $w={58}>
      <GroupBody $center>
        <BigButton $card>
          <BigIcon $card><WindowIcon /></BigIcon>
          <Caption>Window</Caption><Caption><Chevron /></Caption>
        </BigButton>
      </GroupBody>
    </Group>
    <Group $w={86}>
      <GroupBody $center>
        <BigButton $card>
          <BigIcon $card><Speaker /></BigIcon>
          <Caption>Read Out</Caption><Caption>Loud <Chevron /></Caption>
        </BigButton>
      </GroupBody>
    </Group>
  </Ribbon>
);

const StatusBar = () => (
  <Status>
    <GripHandle />
    <TextTool><Gears />Options...</TextTool>
    <Tool $w={19} aria-label="Options list"><Chevron /></Tool>
    <Spacer />
    <GripHandle />
    <Tool $dim aria-label="First page"><Circle d={paths.first} /></Tool>
    <Tool $dim aria-label="Previous page"><Circle d={paths.left} /></Tool>
    <PageBox><input aria-label="Page" defaultValue="1" /><span>/4</span></PageBox>
    <Tool $w={24} aria-label="Next page"><Circle d={paths.right} /></Tool>
    <Tool $w={30} aria-label="Last page"><Circle d={paths.last} /></Tool>
    <VLine />
    <Tool $w={30} aria-label="Back"><Circle color={c.green} d={paths.back} /></Tool>
    <Tool $w={30} aria-label="Forward"><Circle color={c.green} d={paths.fwd} dim /></Tool>
    <GripHandle />
    <Tool aria-label="Single page"><SinglePage /></Tool>
    <Tool $on aria-label="Continuous"><ContPages /></Tool>
    <Tool aria-label="Two pages"><TwoPages /></Tool>
    <Tool $w={30} aria-label="Four pages"><FourPages /></Tool>
    <GripHandle />
    <ZoomCombo w={82} />
    <VLine $m={2} />
    <Tool $w={26} aria-label="Zoom out"><Circle d={paths.minus} /></Tool>
    <Slider type="range" aria-label="Zoom level" min="0" max="100" defaultValue="16" />
    <Tool $w={28} aria-label="Zoom in"><Circle d={paths.plus} /></Tool>
    <GripHandle />
    <Tool $w={28} aria-label="View"><ViewIcon /></Tool>
    <Tool $w={24} aria-label="View list"><Chevron color="#999" /></Tool>
  </Status>
);

const ToolPane = ({ selected, onSelect }) => (
  <Pane $w={178}>
    <PaneTools>
      <TextTool><ResetIcon />Reset</TextTool>
      <PaneMore aria-label="More"><BarUp /></PaneMore>
    </PaneTools>
    <PaneRow>
      <ListBox>
        <Section><Bullet />Drawings</Section>
        {shapes.map(name => (
          <ShapeRow key={name} $on={selected === name} onClick={() => onSelect(name)}>
            <ShapeIcon name={name} />{name}
          </ShapeRow>
        ))}
        <Section $h={21}><Bullet />Measurement</Section>
      </ListBox>
      <ScrollTrack><Chevron up /><Thumb $part={112} /><Rest $part={210} /><Chevron /></ScrollTrack>
    </PaneRow>
  </Pane>
);

const StylePane = () => (
  <Pane>
    <PaneTools>
      <TextTool><CloneIcon />Clone</TextTool>
      <TextTool $dim $pad={3}><RenameIcon />Rename</TextTool>
      <VLine />
      <TextTool $pad={3}><ResetIcon />Reset</TextTool>
      <TextTool $dim $pad={3}><Trash />Delete</TextTool>
      <VLine />
      <TextTool $on><PropsIcon />Properties</TextTool>
      <VLine $m={1} />
      <TextTool $dim $pad={1}><CheckCircle />Set Current</TextTool>
      <PaneMore aria-label="More"><BarUp /></PaneMore>
    </PaneTools>
    <Split>
      <Framed>
        <ListBox>
          <StyleCell $current><Swatch $fill="#d8d8d8" $stroke={c.red} />Current Style</StyleCell>
          <Section $h={22}><Bullet />Custom Styles</Section>
          {styleRows.map((row, i) => (
            <StyleLine key={i}>
              {row.map(s => (
                <StyleCell key={s.stroke} $w={s.w} aria-label={s.name}>
                  <Swatch $fill={s.fill || '#fff'} $stroke={s.stroke} />{s.name}
                </StyleCell>
              ))}
            </StyleLine>
          ))}
        </ListBox>
        <ScrollTrack><Chevron up /><Thumb $part={234} /><Rest $part={80} /><Chevron /></ScrollTrack>
      </Framed>
      <Framed>
        <PropSheet>
          <Section $h={21}><Chevron />Subject</Section>
          {subjectProps.map(p => <Property key={p.label} {...p} />)}
          <Section $h={21}><Chevron />Style</Section>
          {styleProps.map(p => <Property key={p.label} {...p} />)}
        </PropSheet>
      </Framed>
    </Split>
  </Pane>
);

export default function App() {
  const [selected, setSelected] = useState('Rectangle');

  return (
    <>
      <GlobalStyle />
      <Stage>
        <Shell>
          <Top />
          <RibbonTabs />
          <RibbonBar />
          <DocTabs>
            <DocTab>
              <span>Architecture</span>
              <button aria-label="Close tab"><Icon w={7}><path d="m1 1 5 5m0-5L1 6" stroke="#222" strokeWidth="1.500" /></Icon></button>
            </DocTab>
            <TabSquare aria-label="New tab"><Icon w={15}><path d="M7.500 0v15M0 7.500h15" stroke="#222" strokeWidth="1.200" /></Icon></TabSquare>
            <Spacer />
            <TabSquare aria-label="Close document"><Icon w={12}><path d="m0 0 12 12M12 0 0 12" stroke="#222" strokeWidth="1.200" /></Icon></TabSquare>
          </DocTabs>
          <Main>
            <SideBar>
              <SideTop><BarLeft /><Grip $w={26} $h={9} /></SideTop>
              {sideTop.map(([name, Art, dot]) => (
                <SideButton key={name} $dot={dot} aria-label={name}><Art /></SideButton>
              ))}
              <hr />
              <SideButton $dot aria-label="Tags"><TagIcon /></SideButton>
              <SideButton aria-label="Order"><Order /></SideButton>
              <Icon w={9} h={12}><path d="m1 1 3.500 3L8 1M1 6l3.500 3L8 6" stroke="#333" strokeWidth="1.500" /></Icon>
            </SideBar>
            <Work>
              <Canvas>
                <Doc>
                  <Sheet>
                    <Icon w={450} h={6}>
                      <path d="M98 1l4 3 4-3M186.500 0v6M240.500 0v6M360 0v2M112 4.500h30" stroke="#333" />
                      <path d="m128 0 3 2 6-1-4 3 1 2-5-2-6 1 3-3Z" fill="#111" />
                      <text x="297" y="4" fontSize="6" fill="#444">SHEATHING ON 11 7/8" MANUF</text>
                    </Icon>
                  </Sheet>
                </Doc>
                <ScrollTrack><Chevron up /><Thumb $part={50} /><Rest $part={310} /><Chevron /></ScrollTrack>
              </Canvas>
              <StatusBar />
            </Work>
          </Main>
          <Palette aria-label="Comment Styles Palette">
            <PaletteHead>
              <h2>Comment Styles Palette</h2>
              <CloseButton aria-label="Close palette">x</CloseButton>
            </PaletteHead>
            <PaletteBody>
              <ToolPane selected={selected} onSelect={setSelected} />
              <StylePane />
            </PaletteBody>
          </Palette>
        </Shell>
      </Stage>
    </>
  );
}
